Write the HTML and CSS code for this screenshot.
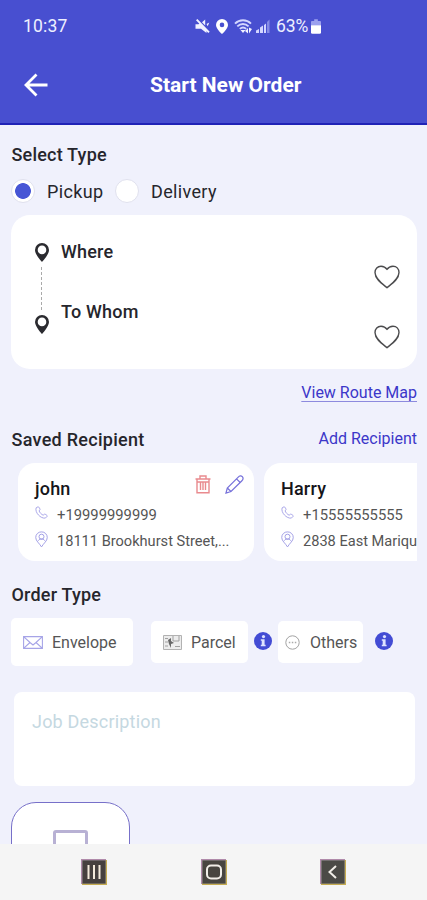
FILE: index.html
```html
<!DOCTYPE html>
<html lang="en">
<head>
<meta charset="utf-8">
<title>Start New Order</title>
<link rel="stylesheet" href="styles.css">
</head>
<body>
<svg class="defs" width="0" height="0" aria-hidden="true">
  <symbol id="pin" viewBox="0 0 14 19"><path fill="#2b2b30" fill-rule="evenodd" d="M7 0a7 7 0 0 0-7 7c0 4.600 7 12 7 12s7-7.400 7-12a7 7 0 0 0-7-7zm0 2.600a4.300 4.300 0 1 1 0 8.600a4.300 4.300 0 0 1 0-8.600z"/></symbol>
  <symbol id="heart" viewBox="0 0 26 24"><path fill="#fff" stroke="#4c4c4e" stroke-width="1.400" stroke-linejoin="round" d="M13 22.700C8 18.700 1 14 1 7.600C1 3.800 3.600 1.200 7 1.200c2.700 0 4.700 1.200 6 3.200c1.300-2 3.300-3.200 6-3.200c3.400 0 6 2.600 6 6.400c0 6.400-7 11.100-12 15.100z"/></symbol>
  <symbol id="phone" viewBox="0 0 14 14"><path fill="none" stroke="#a3a0e6" d="M3.300.8L1.200 2C-.3 7 6 13.800 11.200 13l2.100-2.100c.2-.6-2.400-2.400-3.100-2.100L8.800 9.900C7 9.200 5 7 4.400 5.300l1-1.300C5.600 3.200 4.200.8 3.300.8z"/></symbol>
  <symbol id="place" viewBox="0 0 14 18"><g fill="none" stroke="#9d99e4"><path d="M7 .8a6 6 0 0 0-6.200 6.100C.8 10.600 4.700 13 7 17c2.300-4 6.200-6.400 6.200-10.100A6 6 0 0 0 7 .8z"/><circle cx="7" cy="6" r="2.700"/><path d="M3.500 10.300L5.200 8.500h3.600l1.700 1.800"/></g></symbol>
  <symbol id="info" viewBox="0 0 18 18"><circle cx="9" cy="9" r="9" fill="#434cd4"/><circle cx="9.500" cy="4.600" r="1.600" fill="#dfe3ff"/><path fill="#dfe3ff" d="M6.800 7.300h3.800v5.500h1v1.500H6.800v-1.500h.9v-4h-.9z"/></symbol>
</svg>
<div class="screen">
  <header class="top">
    <div class="status">
      <span class="clock">10:37</span>
      <div class="indicators">
        <svg width="15" height="15" viewBox="0 0 15 15"><path fill="#f1f2ff" d="M.5 5.200h3L5.200 4l6.300 6.300V14L6 9.800H.5zM7 3.300L10.200.5v6zM1 1.300L2.400.1l12.300 12.600-1.400 1.300zM11.500 5l2.800-1.500-1.600 3.700z"/></svg>
        <svg width="12" height="15" viewBox="0 0 12 15"><path fill="#fff" fill-rule="evenodd" d="M6 0a6 6 0 0 0-6 6c0 3.900 6 9 6 9s6-5.100 6-9a6 6 0 0 0-6-6zm0 3.600a2.300 2.300 0 1 1 0 4.600a2.300 2.300 0 0 1 0-4.600z"/></svg>
        <svg width="19" height="15" viewBox="0 0 19 15"><g fill="none" stroke="#d3d6ff" stroke-width="1.900"><path d="M1 4.700C5.500.1 12.500.1 17 4.700M3.300 7.400c3.300-3.200 8-3.200 11.300 0M5.800 9.900c1.900-1.700 4.500-1.700 6.400 0"/></g><path d="M6.500 11h5L9 14zM11 12l3-3v5.500zM15 14.500l3-4.500-3-1.500z" fill="#f1f2ff"/></svg>
        <svg width="15" height="14" viewBox="0 0 15 14"><path fill="#d3d6ff" d="M0 14v-2.500L3 10v4zM4 14V8.500L7 6.500V14zM8 14V6l2-1.500V14z"/><path fill="#858be5" d="M11 14V3l2.500-2.500V14z"/></svg>
        <span class="percent">63%</span>
        <svg width="10" height="15" viewBox="0 0 11 16"><path fill="#9ba0ee" d="M3.500 0h4v2H10q1 0 1 1v4H0V3q0-1 1-1h2.500z"/><path fill="#fff" d="M0 6.500h11v8q0 1.500-1.500 1.500h-8Q0 16 0 14.500z"/></svg>
      </div>
    </div>
    <div class="appbar">
      <svg class="back" width="24" height="24" viewBox="0 0 24 24"><path fill="none" stroke="#fff" stroke-width="2.800" d="M23.500 12H2.500M12.500 1.500L2 12l10.500 10.500"/></svg>
      <h1>Start New Order</h1>
    </div>
  </header>

  <main>
    <h2 class="select-title">Select Type</h2>
    <div class="radios">
      <i class="radio on"></i><span class="pickup">Pickup</span>
      <i class="radio"></i><span>Delivery</span>
    </div>

    <section class="route">
      <div class="track">
        <svg width="14" height="19"><use href="#pin"/></svg>
        <i class="dots"></i>
        <svg width="14" height="19"><use href="#pin"/></svg>
      </div>
      <div class="stops"><span>Where</span><span>To Whom</span></div>
      <div class="hearts">
        <svg width="26" height="24"><use href="#heart"/></svg>
        <svg width="26" height="24"><use href="#heart"/></svg>
      </div>
    </section>
    <div class="map-row"><a class="map-link">View Route Map</a></div>

    <div class="recipient-head"><h2>Saved Recipient</h2><a>Add Recipient</a></div>
    <div class="recipients">
      <article class="person">
        <div class="name"><h3>john</h3>
          <svg class="trash" width="16" height="19" viewBox="0 0 16 19"><g fill="none" stroke="#e98a8e" stroke-width="1.400"><path d="M.5 4h15M5 3.500V1h6v2.500M2 4.500v13.300h12V4.500M5.500 7v8M8 7v8M10.500 7v8M2 7h12"/></g></svg>
          <svg width="19" height="19" viewBox="0 0 19 19"><g fill="none" stroke="#7671da" stroke-width="1.200"><path d="M1 18l1.300-5L13 2.300q2.500-2.500 4.300-.6t-.6 4.300L6 16.500zM2.300 13L6 16.500M11.500 3.800l3.700 3.700"/></g></svg>
        </div>
        <div class="line"><svg width="13" height="13"><use href="#phone"/></svg><span class="tel">+19999999999</span></div>
        <div class="line addr"><svg width="13" height="17"><use href="#place"/></svg><span>18111 Brookhurst Street,...</span></div>
      </article>
      <article class="person">
        <div class="name"><h3>Harry</h3></div>
        <div class="line"><svg width="13" height="13"><use href="#phone"/></svg><span class="tel">+15555555555</span></div>
        <div class="line addr"><svg width="13" height="17"><use href="#place"/></svg><span>2838 East Mariqu</span></div>
      </article>
    </div>

    <h2 class="order-title">Order Type</h2>
    <div class="types">
      <div class="chip envelope"><svg width="20" height="13" viewBox="0 0 20 13"><path fill="none" stroke="#a6a4e7" stroke-width="1.100" d="M.6.6h18.800v11.800H.6zM.6.6L7 6.500 10 9l3-2.500L19.400.6M.6 12.400L7 6.500M19.400 12.400L13 6.500"/></svg><span>Envelope</span></div>
      <div class="chip parcel"><svg width="19" height="15" viewBox="0 0 19 15"><path fill="#ececec" stroke="#b2b2b2" d="M.5.500h18v14H.5z"/><path fill="none" stroke="#a0a0a0" d="M2 3.500h3M2 7h3M2 11h3M12 11.500h5M10 1v5h6V1"/><path fill="#666" d="M5 5l3-2v3l3 2-3 1v4L6 9z"/></svg><span>Parcel</span></div>
      <svg class="info" width="18" height="18"><use href="#info"/></svg>
      <div class="chip others"><svg width="15" height="15" viewBox="0 0 15 15"><circle cx="7.500" cy="7.500" r="6.700" fill="none" stroke="#a2a2a2"/><path stroke="#aaa" stroke-width="1.300" stroke-dasharray="1.500 1.500" d="M3.800 7.500h8"/></svg><span>Others</span></div>
      <svg class="info" width="18" height="18"><use href="#info"/></svg>
    </div>

    <div class="description">Job Description</div>
    <div class="photo"><i></i></div>
  </main>

  <nav>
    <svg width="26" height="26" viewBox="0 0 26 26"><path class="fringe-a" d="M.7 25V.7H25"/><path class="fringe-b" d="M25.300 1v24.300H1"/><path fill="#46403e" d="M1.300 1.300h23.400v23.400H1.300z"/><path stroke="#f4eadb" stroke-width="2" d="M7.500 6v14M13 6v14M18.500 6v14"/></svg>
    <svg width="26" height="26" viewBox="0 0 26 26"><path class="fringe-a" d="M.7 25V.7H25"/><path class="fringe-b" d="M25.300 1v24.300H1"/><path fill="#484540" d="M1.300 1.300h23.400v23.400H1.300z"/><rect x="6" y="6.500" width="14" height="13" rx="4" fill="none" stroke="#f1eee8" stroke-width="2"/></svg>
    <svg width="26" height="26" viewBox="0 0 26 26"><path class="fringe-a" d="M.7 25V.7H25"/><path class="fringe-b" d="M25.300 1v24.300H1"/><path fill="#4b4a46" d="M1.300 1.300h23.400v23.400H1.300z"/><path fill="none" stroke="#f1eee8" stroke-width="2" d="M16 7l-6.500 6 6.500 6"/></svg>
  </nav>
</div>
</body>
</html>
```
FILE: styles.css
```css
* { box-sizing: border-box; }
body { margin: 0; font-family: Roboto, "Liberation Sans", sans-serif; color: #26262c; }
h1, h2, h3 { margin: 0; font-weight: 500; }
svg { display: block; flex: none; }
span, h1, h2, h3, a { white-space: nowrap; }
.defs { position: absolute; }
.screen { width: 427px; height: 900px; display: flex; flex-direction: column; overflow: hidden; background: #f0f1fc; }

.top { height: 125px; flex: none; background: #484fd0; border-bottom: 2px solid #2023b6; }
.status { height: 52px; display: flex; justify-content: space-between; align-items: center; padding: 0 106px 0 23px; color: #eef0ff; font-size: 17.500px; }
.clock { letter-spacing: .2px; }
.indicators { display: flex; align-items: center; }
.indicators svg:nth-child(1) { margin-right: 6px; }
.indicators svg:nth-child(2) { margin-right: 6px; }
.indicators svg:nth-child(3) { margin-right: 3px; }
.indicators svg:nth-child(4) { margin-right: 5px; }
.percent { width: 35px; letter-spacing: -.1px; }
.appbar { height: 66px; display: flex; align-items: center; padding-left: 24px; }
.appbar h1 { margin-left: 102px; font-size: 21px; font-weight: 700; color: #fff; }

main { flex: 1; min-height: 0; overflow: hidden; padding: 0 10px 0 11px; }
h2 { padding-left: .5px; font-size: 18px; line-height: 24px; letter-spacing: .2px; }
.select-title { padding-top: 18px; }
.radios { height: 48px; display: flex; align-items: center; font-size: 18px; letter-spacing: .35px; }
.radio { width: 24px; height: 24px; border-radius: 50%; background: #fff; border: 1px solid #e0e1ee; flex: none; }
.radio.on { background: radial-gradient(circle, #4756d5 0 7.500px, #fff 8.200px); }
.radio + span { margin-left: 12px; }
.pickup { width: 68px; }

.route { height: 154px; background: #fff; border-radius: 19px; display: flex; padding: 28px 17px 0 24px; }
.dots { display: block; width: 0; height: 43px; margin: 5px 0 5px 6px; border-left: 1px dashed #aaa; }
.stops { flex: 1; display: flex; flex-direction: column; gap: 36px; margin-left: 12px; font-size: 18px; line-height: 24px; font-weight: 500; letter-spacing: .2px; }
.stops span { transform: translateY(-3px); }
.hearts { display: flex; flex-direction: column; gap: 36px; padding-top: 22px; }
.map-row { display: flex; justify-content: flex-end; padding-top: 12px; }
a { color: #3c37c9; font-size: 16px; line-height: 24px; }
.map-link { text-decoration: underline #8d8ade; text-decoration-thickness: 1px; text-underline-offset: 3px; }

.recipient-head { display: flex; justify-content: space-between; margin-top: 23px; }
.recipient-head h2 { letter-spacing: .28px; }
.recipient-head a { margin-top: -1.500px; }
.recipients { display: flex; gap: 10px; padding-left: 7px; margin-top: 11px; overflow: hidden; }
.person { width: 236px; height: 98px; flex: none; background: #fff; border-radius: 17px; padding: 12px 10px 0 17px; }
.name { height: 27px; display: flex; align-items: center; }
.name h3 { flex: 1; font-size: 18px; letter-spacing: .2px; color: #15151a; }
.name svg { transform: translateY(-4px); }
.trash { margin-right: 14px; }
.line { height: 26px; display: flex; align-items: center; gap: 9px; font-size: 14.800px; color: #555; }
.line svg { transform: translateY(-3px); }
.line.addr { font-size: 14.600px; }
.line.addr svg { transform: translateY(-2px); }

.order-title { margin-top: 22px; }
.types { display: flex; align-items: center; height: 48px; margin-top: 11px; }
.chip { height: 42px; background: #fff; border-radius: 5px; display: flex; align-items: center; font-size: 16px; color: #555; }
.envelope { width: 122px; height: 48px; margin-right: 18px; padding-left: 12px; gap: 9px; }
.parcel { width: 97px; margin-right: 6px; padding-left: 12px; gap: 9px; }
.others { width: 85px; margin: 0 12px 0 6px; padding-left: 7px; gap: 10px; }
.info { transform: translateY(-1px); }

.description { height: 94px; margin: 26px 2px 0 3px; padding: 18px; background: #fff; border-radius: 8px; font-size: 18px; line-height: 24px; letter-spacing: .2px; color: #c5d8e1; }
.photo { width: 119px; height: 100px; margin-top: 16px; padding-top: 27px; border: 1px solid #7770c9; border-radius: 25px; background: #fff; }
.photo i { display: block; width: 35px; height: 40px; margin: 0 auto; border: 3px solid #b8b1d4; border-radius: 3px; }

nav { height: 56px; flex: none; background: #f5f5f5; display: flex; align-items: center; justify-content: space-between; padding: 0 81px; }
.fringe-a { fill: none; stroke: #b08aaa; stroke-width: 1.400; }
.fringe-b { fill: none; stroke: #c6ac50; stroke-width: 1.400; }
```
